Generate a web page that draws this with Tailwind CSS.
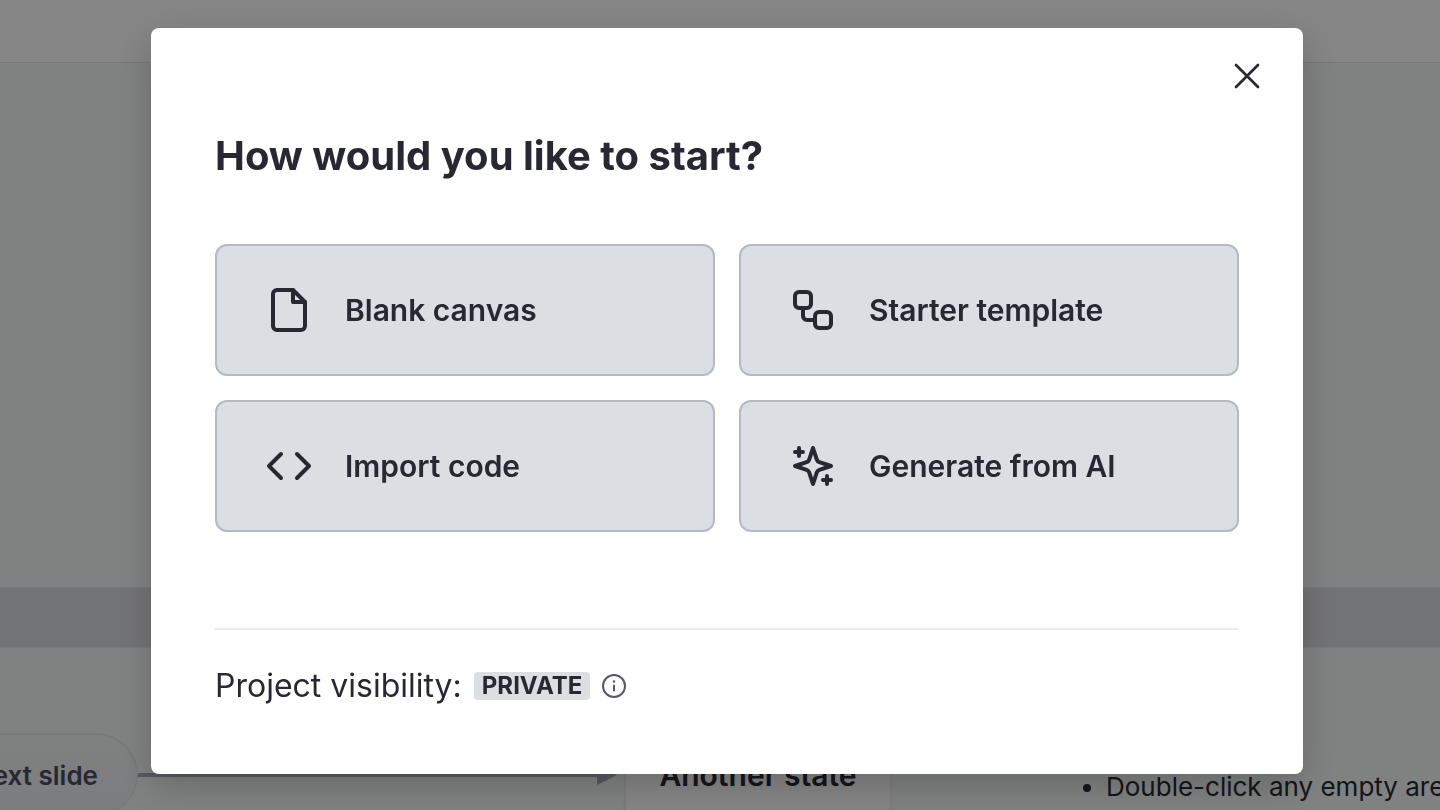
<!DOCTYPE html>
<html lang="en">
<head>
<meta charset="utf-8">
<meta name="viewport" content="width=device-width, initial-scale=1">
<title>New project</title>
<script src="https://cdn.jsdelivr.net/npm/@tailwindcss/browser@4"></script>
</head>
<body class="relative h-screen overflow-hidden bg-[#f4f9f6] font-['Inter',sans-serif] text-[#282833]">

<!-- Editor behind the dialog -->
<div class="flex h-full flex-col" aria-hidden="true">
  <div class="h-[63px] shrink-0 border-b border-[#e4e8e6] bg-white"></div>
  <div class="h-[524px] shrink-0"></div>
  <div class="h-[61px] shrink-0 border-y border-[#e4e6ea] bg-[#dbdce1]"></div>
  <div class="relative grow overflow-hidden">
    <div class="absolute top-[125px] left-[137px] h-1 w-[460px] bg-[#a9abb9]"></div>
    <svg class="absolute top-[117px] left-[597px] h-5 w-5" viewBox="0 0 20 20" fill="#a9abb9"><path d="M0 0 20 10 0 20z"/></svg>
    <div class="absolute top-[85px] -left-[92px] flex h-[84px] w-[230px] items-center justify-end rounded-full border-2 border-[#e6eae8] bg-linear-to-b from-[#f4f9f6] to-[#ecedf2] pr-[38px] text-[26px] font-semibold text-[#4c4d60]">Next slide</div>
    <div class="absolute top-[85px] left-[626px] flex h-[84px] w-[264px] items-center justify-center bg-white text-[30px] font-semibold shadow-md">Another state</div>
    <ul class="absolute top-[119px] left-[1106px] list-disc text-[26px] leading-10 whitespace-nowrap">
      <li>Double-click any empty area to add a state</li>
    </ul>
  </div>
</div>

<!-- Backdrop and dialog -->
<div class="fixed inset-0 flex items-start justify-center bg-black/48 pt-7 pl-[14px]">
  <div role="dialog" aria-modal="true" aria-labelledby="dialog-title" class="w-full max-w-6xl rounded-lg bg-white px-16 pt-6 pb-16 shadow-[0_12px_36px_rgb(0_0_0/0.2)]">
    <div class="-mr-8 flex justify-end">
      <button type="button" aria-label="Close" class="flex size-12 items-center justify-center">
        <svg class="size-6 overflow-visible" viewBox="0 0 24 24" fill="none" stroke="currentColor" stroke-width="2.700" stroke-linecap="round"><path d="M1 1 23 23M23 1 1 23"/></svg>
      </button>
    </div>
    <h1 id="dialog-title" class="mt-8 text-[40px] leading-12 font-bold">How would you like to start?</h1>

    <div class="mt-16 grid grid-cols-2 gap-6 text-[30px] font-semibold">
      <button type="button" class="flex h-33 items-center gap-8 rounded-xl border-2 border-[#b5b9c4] bg-[#dbdee3] px-12">
        <svg class="size-12 shrink-0" viewBox="0 0 24 24" fill="none" stroke="currentColor" stroke-width="2" stroke-linecap="round" stroke-linejoin="round"><path d="M14 2H6a2 2 0 0 0-2 2v16a2 2 0 0 0 2 2h12a2 2 0 0 0 2-2V8z"/><path d="M14 2v6h6"/></svg>
        Blank canvas
      </button>
      <button type="button" class="flex h-33 items-center gap-8 rounded-xl border-2 border-[#b5b9c4] bg-[#dbdee3] px-12">
        <svg class="size-12 shrink-0" viewBox="0 0 24 24" fill="none" stroke="currentColor" stroke-width="2" stroke-linecap="round" stroke-linejoin="round"><rect x="3" y="3" width="8" height="8" rx="2"/><path d="M7 11v4a2 2 0 0 0 2 2h4"/><rect x="13" y="13" width="8" height="8" rx="2"/></svg>
        Starter template
      </button>
      <button type="button" class="flex h-33 items-center gap-8 rounded-xl border-2 border-[#b5b9c4] bg-[#dbdee3] px-12">
        <svg class="size-12 shrink-0" viewBox="0 0 24 24" fill="none" stroke="currentColor" stroke-width="2" stroke-linecap="round" stroke-linejoin="round"><path d="m16 18 6-6-6-6M8 6l-6 6 6 6"/></svg>
        Import code
      </button>
      <button type="button" class="flex h-33 items-center gap-8 rounded-xl border-2 border-[#b5b9c4] bg-[#dbdee3] px-12">
        <svg class="size-12 shrink-0" viewBox="0 0 24 24" fill="none" stroke="currentColor" stroke-width="2" stroke-linecap="round" stroke-linejoin="round"><path d="m12 3-1.912 5.813a2 2 0 0 1-1.275 1.275L3 12l5.813 1.912a2 2 0 0 1 1.275 1.275L12 21l1.912-5.813a2 2 0 0 1 1.275-1.275L21 12l-5.813-1.912a2 2 0 0 1-1.275-1.275L12 3Z"/><path d="M5 3v4M19 17v4M3 5h4M17 19h4"/></svg>
        Generate from AI
      </button>
    </div>

    <div class="mt-24 flex items-center border-t-2 border-[#ebebec] pt-8">
      <span class="text-[32px] leading-12">Project visibility:</span>
      <span class="ml-3 rounded-sm bg-[#dbdee3] px-2 text-2xl leading-7 font-bold">PRIVATE</span>
      <button type="button" aria-label="About project visibility" class="ml-3 text-[#57586e]">
        <svg class="size-6" viewBox="0 0 24 24" fill="none" stroke="currentColor" stroke-width="2" stroke-linecap="round"><circle cx="12" cy="12" r="11"/><path d="M12 11.500v5"/><circle cx="12" cy="7.500" r="1.200" fill="currentColor" stroke="none"/></svg>
      </button>
    </div>
  </div>
</div>
</body>
</html>
